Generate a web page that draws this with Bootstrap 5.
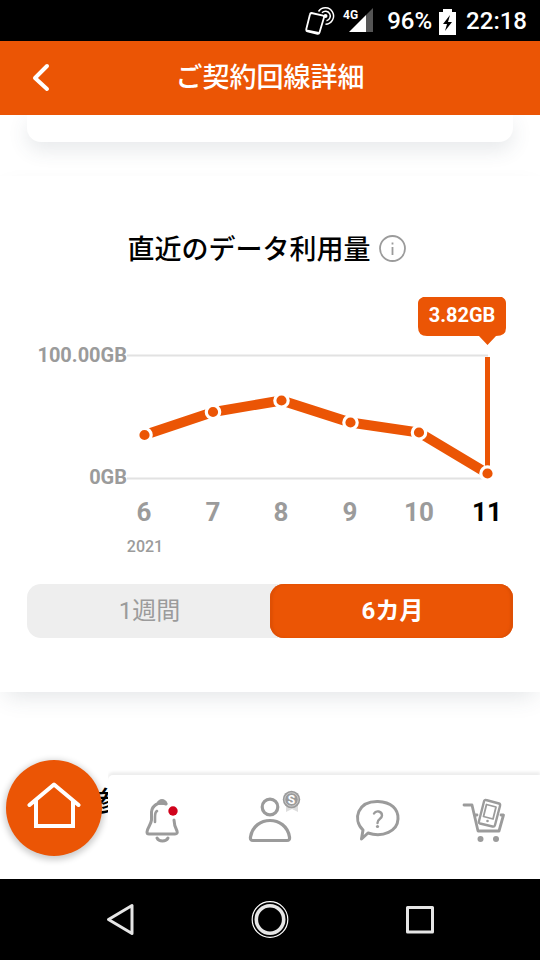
<!DOCTYPE html>
<html lang="ja">
<head>
<meta charset="utf-8">
<meta name="viewport" content="width=device-width, initial-scale=1">
<title>ご契約回線詳細</title>
<link href="https://cdn.jsdelivr.net/npm/bootstrap@5.3.0/dist/css/bootstrap.min.css" rel="stylesheet">
<style>
:root { --brand: #eb5505; --muted: #9b9b9b; }
body { font-family: Roboto, "Noto Sans CJK JP", sans-serif; background: #fff; color: #000; }
svg { display: block; }
.status-bar { height: 41px; background: #000; color: #fff; font-size: 24px; line-height: 41px; font-weight: 500; padding: 2px 13px 0 0; }
.signal { margin-right: 14px; }
.battery { margin: 0 10px 0 7px; }
.app-header { height: 74px; background: var(--brand); color: #fff; }
.app-header h1, .panel-title { font-size: 27px; line-height: 40px; font-weight: 500; }
.side { flex: 1 1 0; }
.content { flex: 1 1 0; min-height: 0; }
.line-card { height: 27px; margin: 0 27px 34px; border-radius: 0 0 14px 14px; box-shadow: 0 8px 20px rgba(60, 75, 90, .12); }
.panel { position: relative; background: #fff; }
.usage { padding: 54px 27px; margin-bottom: 33px; box-shadow: 0 10px 22px -6px rgba(60, 75, 90, .15); }
.usage-head { padding-right: 7px; }
.chart { width: 100%; height: auto; margin-top: 26px; }
.chart text { font-weight: 700; fill: var(--muted); }
.chart .axis { font-size: 20px; }
.chart .month { font-size: 26px; text-anchor: middle; }
.chart .year { font-size: 16px; font-weight: 500; text-anchor: middle; }
.chart .month.current { fill: #000; }
.chart .tip { font-size: 20px; fill: #fff; text-anchor: middle; }
.period { background: #eee; border-radius: 14px; margin-top: 24px; }
.period .btn { height: 54px; border: 0; border-radius: 14px; font-size: 24px; line-height: 36px; color: var(--muted); padding: 6px 0 6px 2px; }
.period .btn.active { background: var(--brand); color: #fff; font-weight: 700; box-shadow: inset -3px 0 2px #df5005, inset 3px 0 2px #df5005; }
.next-panel { padding: 57px 95px; }
.tabs { height: 104px; margin-top: -104px; z-index: 3; }
.tab-item { flex: 1 1 0; }
.tab-group { flex: 4 1 0; background: #fff; color: var(--muted); border-radius: 5px 0 0 0; box-shadow: 0 -3px 3px rgba(0, 0, 0, .07); clip-path: inset(-8px 0 0 0); }
.tab-plain { padding-top: 20px; }
.home-btn { width: 96px; height: 96px; margin-top: -15px; margin-left: 6px; background: var(--brand); border-radius: 50%; box-shadow: 0 2px 6px 2px rgba(0, 0, 0, .2); }
.nav-keys { height: 81px; background: #000; padding: 0 45px; }
.nav-keys .btn { flex: 1 1 0; }
</style>
<script src="https://cdn.jsdelivr.net/npm/bootstrap@5.3.0/dist/js/bootstrap.bundle.min.js"></script>
</head>
<body class="d-flex flex-column vh-100 overflow-hidden">
<div class="status-bar d-flex justify-content-end align-items-center flex-shrink-0">
  <svg class="signal" width="70" height="36" viewBox="303 4 70 36" fill="none" role="img" aria-label="4G">
    <path d="M311.500 13L323 15.500a1.500 1.500 0 0 1 1 2L319.500 32.500a1.800 1.800 0 0 1-2 1.300L307.500 31.500a1.800 1.800 0 0 1-1.300-2L310 14.200a1.500 1.500 0 0 1 1.500-1.200z" stroke="#fff" stroke-width="1.800"/>
    <path d="M306.500 29.500L319 32L318.500 34L306 31.500z" fill="#fff"/>
    <circle cx="325.500" cy="16" r="2" fill="#fff"/>
    <path d="M322 12.700A4.800 4.800 0 1 1 326.500 20.700M318.500 11.500A8.200 8.200 0 1 1 325.500 24.200" stroke="#fff" stroke-width="1.500"/>
    <path d="M349 32L366 15V32z" fill="#fff"/><path d="M366 15L373 8V32H366z" fill="#555"/>
    <text x="343" y="19" font-size="12" font-weight="700" fill="#fff">4G</text>
  </svg>
  <span>96%</span>
  <svg class="battery" width="17" height="26" viewBox="0 0 17 26" role="img" aria-label="充電中"><path d="M4 0h9v3h4v23H0V3h4z" fill="#fff"/><path d="M11 6L4 15h4l-2 7 7-9H9z" fill="#000"/></svg>
  <span>22:18</span>
</div>
<header class="app-header d-flex align-items-center flex-shrink-0">
  <div class="side"><button class="btn border-0 p-0 ms-4" type="button" aria-label="戻る"><svg width="32" height="32" viewBox="0 1 32 32" fill="none" stroke="#fff" stroke-width="4" stroke-linecap="round" stroke-linejoin="round"><path d="M23 5L11 17L23 28"/></svg></button></div>
  <h1 class="m-0">ご契約回線詳細</h1>
  <div class="side"></div>
</header>
<main class="content overflow-hidden">
  <div class="line-card"></div>
  <section class="panel usage">
    <div class="usage-head d-flex justify-content-center align-items-center">
      <h2 class="panel-title m-0">直近のデータ利用量</h2>
      <button class="btn border-0 p-0 pb-1 ms-2" type="button" aria-label="データ利用量について"><svg width="27" height="27" viewBox="0 1 27 27" fill="none" stroke="#9b9b9b"><circle cx="13.500" cy="14.500" r="12.500" stroke-width="1.800"/><path d="M13.500 13v8M13.500 8.500v2" stroke-width="1.800"/></svg></button>
    </div>
    <svg class="chart" viewBox="27 296 486 264" role="img" aria-label="直近6カ月のデータ利用量">
      <path d="M127 355.500H488M127 478.500H488" stroke="#e2e2e2" stroke-width="2"/>
      <text class="axis" x="127" y="362" text-anchor="end">100.00GB</text>
      <text class="axis" x="127" y="484" text-anchor="end">0GB</text>
      <path d="M487.500 357V473" stroke="#eb5505" stroke-width="5"/>
      <path d="M144.500 435L213 412L281.500 400.500L350.500 422.500L419 432.500L487.500 473.500" fill="none" stroke="#eb5505" stroke-width="10"/>
      <g fill="#eb5505" stroke="#fff" stroke-width="3.200">
        <circle cx="144.500" cy="435" r="6.700"/><circle cx="213" cy="412" r="6.700"/><circle cx="281.500" cy="400.500" r="6.700"/><circle cx="350.500" cy="422.500" r="6.700"/><circle cx="419" cy="432.500" r="6.700"/><circle cx="487.500" cy="473.500" r="6.700"/>
      </g>
      <path d="M423 297H502Q506 299 506 303V328Q506 336 496 336L487.500 345L479 336H427Q418 336 418 327V303Q418 299 423 297z" fill="#eb5505"/>
      <text class="tip" x="462" y="322">3.82GB</text>
      <text class="month" x="144" y="521">6</text><text class="month" x="213" y="521">7</text><text class="month" x="281" y="521">8</text><text class="month" x="350" y="521">9</text><text class="month" x="419" y="521">10</text><text class="month current" x="487" y="521">11</text>
      <text class="year" x="145" y="552">2021</text>
    </svg>
    <div class="period d-flex" role="group" aria-label="期間">
      <button class="btn w-50" type="button" aria-pressed="false">1週間</button>
      <button class="btn w-50 active" type="button" aria-pressed="true">6カ月</button>
    </div>
  </section>
  <section class="panel next-panel"><h2 class="panel-title m-0">参</h2></section>
</main>
<nav class="tabs d-flex flex-shrink-0 position-relative" aria-label="メインメニュー">
  <div class="tab-item">
    <a href="#" class="home-btn d-flex align-items-center justify-content-center" aria-label="ホーム"><svg width="54" height="54" viewBox="27 781 54 54" fill="none" stroke="#fff" stroke-width="4"><path d="M29.500 805L54 784.500L78.500 805" stroke-linecap="round" stroke-linejoin="round"/><path d="M36 800V826H73V800"/></svg></a>
  </div>
  <div class="tab-group d-flex">
  <a href="#" class="tab-item tab-plain d-flex justify-content-center align-items-start" aria-label="お知らせ"><svg width="54" height="52" viewBox="135 795 54 52" fill="none" stroke="#9b9b9b" stroke-width="3" stroke-linecap="round" stroke-linejoin="round"><path d="M166 804C158 801 152 806 151.500 812V820C151 825 147 828 147 832Q147 834 149 834H175Q178 834 177 831C175 827 174 825 174 820"/><path d="M155 822V817Q155 812 157 811" stroke-width="2.600"/><path d="M157 804C157 798 167 798 167 804z" fill="#9b9b9b" stroke-width="1"/><path d="M157 838C159 842 166 842 168 838"/><circle cx="173" cy="811" r="4.700" fill="#d0021b" stroke="none"/></svg></a>
  <a href="#" class="tab-item tab-plain d-flex justify-content-center align-items-start" aria-label="マイページ"><svg width="64" height="52" viewBox="238 795 64 52" overflow="visible" fill="none" stroke="#9b9b9b" stroke-width="3.200" stroke-linejoin="round"><circle cx="270" cy="807" r="7.800"/><path d="M253 840.500H287Q290 840.500 289.500 837C286 815 254 815 250.500 837Q250 840.500 253 840.500z"/><path d="M286 804V812L292 809L298 812V804z" fill="#ddd" stroke="none"/><circle cx="291.500" cy="799.500" r="8.700" fill="#9b9b9b" stroke="none"/><circle cx="291.500" cy="799.500" r="6.700" stroke="#ccc" stroke-width="1"/><text x="291.500" y="804" font-size="12" font-weight="700" fill="#fff" stroke="none" text-anchor="middle">S</text></svg></a>
  <a href="#" class="tab-item tab-plain d-flex justify-content-center align-items-start" aria-label="サポート"><svg width="54" height="52" viewBox="351 795 54 52" fill="none" stroke="#9b9b9b" stroke-width="3" stroke-linecap="round" stroke-linejoin="round"><path d="M363 830C352 819 358 801 378 801.500C391 802 398.500 809 398 819C397.500 831 383 838 368 833L361.500 839z"/><path d="M374 813.500C376 810 382 811 382 815.500C382 819 377.500 818.500 377.500 823" stroke-width="2.400"/><circle cx="377.500" cy="826.500" r="1.600" fill="#9b9b9b" stroke="none"/></svg></a>
  <a href="#" class="tab-item tab-plain d-flex justify-content-center align-items-start" aria-label="ショップ"><svg width="54" height="52" viewBox="459 795 54 52" fill="none" stroke="#9b9b9b" stroke-width="2.800" stroke-linecap="round" stroke-linejoin="round"><path d="M464 805H472L478 831H499L503.500 815H501M475 815H477"/><path d="M486 800L499 803.500Q500.500 804 500 806L495 825Q494.500 827 492.500 826.500L480 823.500Q478.500 823 479 821L484 801.500Q484.500 799.500 486 800z" stroke-width="2.400"/><path d="M486.500 804.500L496 807L493 819L483.500 816.500z" stroke-width="1.800"/><circle cx="487.500" cy="821" r="1.300" fill="#9b9b9b" stroke="none"/><g fill="#9b9b9b" stroke="none"><circle cx="480.500" cy="839" r="3"/><circle cx="496" cy="839" r="3"/></g></svg></a>
  </div>
</nav>
<div class="nav-keys d-flex align-items-center flex-shrink-0">
  <button class="btn border-0 p-0" type="button" aria-label="戻るキー"><svg class="mx-auto" width="40" height="40" viewBox="100 900 40 40" fill="none" stroke="#e6e6e6" stroke-width="3" stroke-linejoin="round"><path d="M108.500 919.500L132 905.500V933.500z"/></svg></button>
  <button class="btn border-0 p-0" type="button" aria-label="ホームキー"><svg class="mx-auto" width="40" height="40" viewBox="250 900 40 40" fill="none" stroke="#e6e6e6"><circle cx="270" cy="919.500" r="17.800" stroke="#fff" stroke-width="1.200"/><circle cx="270" cy="919.500" r="13.700" stroke-width="3.600"/></svg></button>
  <button class="btn border-0 p-0" type="button" aria-label="履歴キー"><svg class="mx-auto" width="40" height="40" viewBox="400 900 40 40" fill="none" stroke="#e6e6e6" stroke-width="3" stroke-linejoin="round"><path d="M407.500 907.500H432.500V932H407.500z"/></svg></button>
</div>
</body>
</html>
